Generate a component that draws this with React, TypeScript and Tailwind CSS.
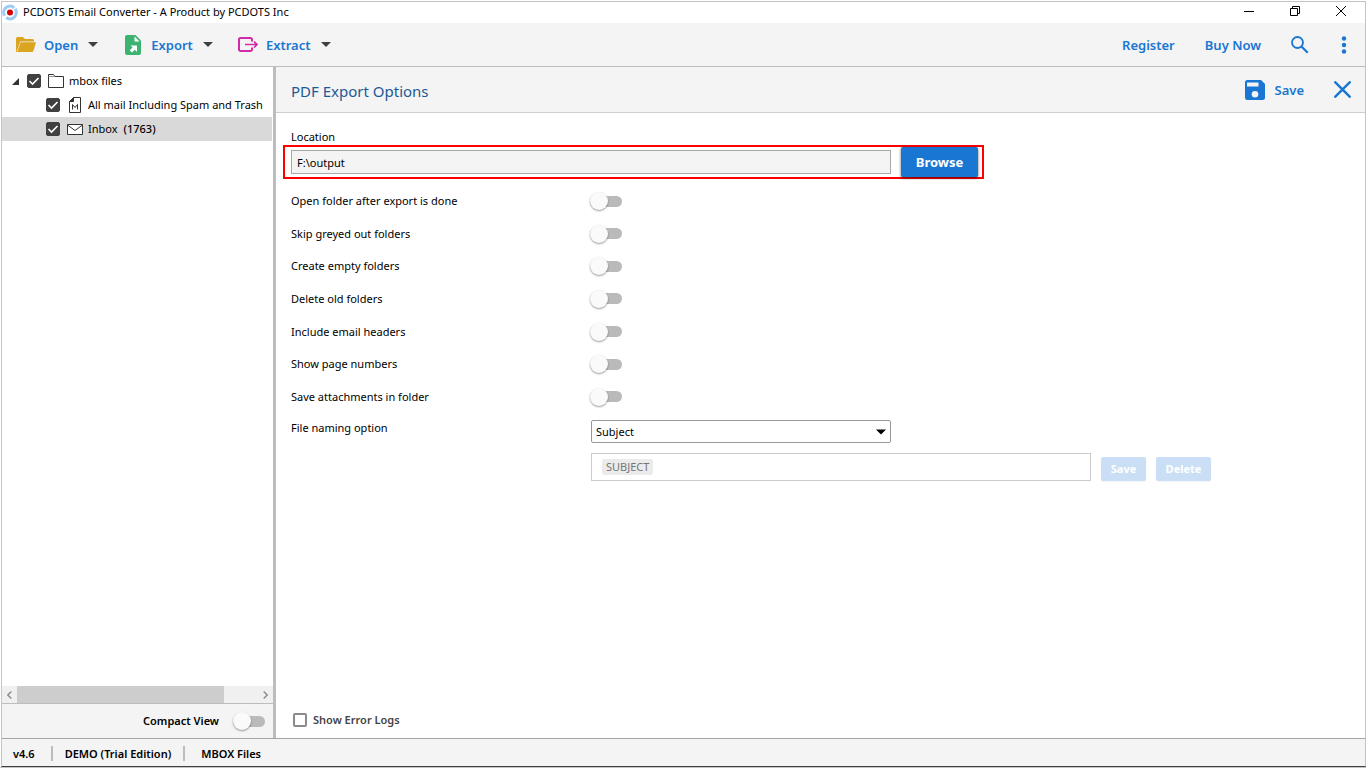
import React, { useState } from 'react';

interface SwitchProps {
  id: string;
  checked: boolean;
  onChange: (value: boolean) => void;
}

interface TreeItem {
  id: string;
  label: string;
  count?: number;
  level: number;
  icon: React.ReactNode;
}

const OPTIONS = [
  { id: 'openFolder', label: 'Open folder after export is done' },
  { id: 'skipGreyed', label: 'Skip greyed out folders' },
  { id: 'createEmpty', label: 'Create empty folders' },
  { id: 'deleteOld', label: 'Delete old folders' },
  { id: 'includeHeaders', label: 'Include email headers' },
  { id: 'pageNumbers', label: 'Show page numbers' },
  { id: 'saveAttachments', label: 'Save attachments in folder' },
];

const LogoIcon = () => (
  <svg width="18" height="18" viewBox="0 0 18 18" fill="none">
    <circle cx="8" cy="8.500" r="6.300" stroke="#9ccbf5" strokeWidth="3" strokeDasharray="17.300 2.500" transform="rotate(-35 8 8.500)" />
    <circle cx="8" cy="8.500" r="3" fill="#d40000" />
  </svg>
);

const OpenIcon = () => (
  <svg width="20" height="16" viewBox="0 0 20 16">
    <path d="M1.5 0H7l2 2h7.5A1.5 1.5 0 0 1 18 3.500V4.500H4.200L1.500 12.500 0 14V1.500A1.500 1.500 0 0 1 1.500 0Z" fill="#daa520" />
    <path d="M4.500 5.300H20L17.400 14a1.500 1.500 0 0 1-1.400 1H1.200Z" fill="#daa520" />
    <path d="M0 12L1.500 15H0Z" fill="#daa520" />
  </svg>
);

const ExportIcon = () => (
  <svg width="16" height="20" viewBox="0 0 16 20">
    <path d="M2 0H10.500L16 5.500V18a2 2 0 0 1-2 2H2a2 2 0 0 1-2-2V2A2 2 0 0 1 2 0Z" fill="#3cb371" />
    <path d="M9.500 1.500V6.500H14.500Z" fill="#fff" />
    <path d="M5.500 10.500H12V17L9.800 14.800 7 17.600 4.700 15.300 7.600 12.600Z" fill="#fff" />
  </svg>
);

const ExtractIcon = () => (
  <svg width="20" height="16" viewBox="0 0 20 16" fill="none" stroke="#d12ba8" strokeWidth="2">
    <path d="M14 4.500V2.500A1.500 1.500 0 0 0 12.500 1H2.500A1.500 1.500 0 0 0 1 2.500V12.500A1.500 1.500 0 0 0 2.500 14H12.500A1.500 1.500 0 0 0 14 12.500V10.500" />
    <path d="M7 7.500H18.500M16 4.500L19 7.500 16 10.500" strokeWidth="1.700" />
  </svg>
);

const Caret = () => (
  <svg width="10" height="5" viewBox="0 0 10 5">
    <path d="M0 0H10L5 5Z" fill="#404040" />
  </svg>
);

const FolderIcon = () => (
  <svg width="16" height="14" viewBox="0 0 16 14" fill="#fff" stroke="#333" strokeWidth="1">
    <path d="M.5 13.500V.5H5.500L7 2.500H15.500V13.500Z" />
    <path d="M.5 2.500H7" stroke="#999" />
  </svg>
);

const MboxIcon = () => (
  <svg width="12" height="16" viewBox="0 0 12 16" fill="#fff" stroke="#333" strokeWidth="1">
    <path d="M4.500 .5H11.500V15.500H.5V4.500Z" />
    <path d="M4.500 .5V4.500H.5Z" fill="#333" />
    <path d="M3.500 12.500V7.500L6 10.500 8.500 7.500V12.500" fill="none" />
  </svg>
);

const MailIcon = () => (
  <svg width="16" height="11" viewBox="0 0 16 11" fill="#fff" stroke="#333" strokeWidth="1">
    <path d="M.5 .5H15.500V10.500H.5Z" />
    <path d="M.5 1L8 6.500 15.500 1" fill="none" />
  </svg>
);

const SaveIcon = () => (
  <svg width="20" height="20" viewBox="0 0 20 20">
    <path d="M2.500 0H16L20 4V17.500A2.500 2.500 0 0 1 17.500 20H2.500A2.500 2.500 0 0 1 0 17.500V2.500A2.500 2.500 0 0 1 2.500 0Z" fill="#1976d2" />
    <path d="M2 2.500H13.500V6.500H2Z" fill="#f4f4f4" />
    <circle cx="10" cy="14.200" r="3.300" fill="#f4f4f4" />
  </svg>
);

const TREE: TreeItem[] = [
  { id: 'root', label: 'mbox files', level: 0, icon: <FolderIcon /> },
  { id: 'all', label: 'All mail Including Spam and Trash', level: 1, icon: <MboxIcon /> },
  { id: 'inbox', label: 'Inbox', count: 1763, level: 1, icon: <MailIcon /> },
];

const Switch: React.FC<SwitchProps> = ({ id, checked, onChange }) => (
  <input
    id={id}
    type="checkbox"
    role="switch"
    checked={checked}
    onChange={e => onChange(e.target.checked)}
    className="flex h-[11px] w-8 shrink-0 appearance-none items-center rounded-full bg-[#bababa] before:size-[18px] before:rounded-full before:bg-[#fafafa] before:shadow-[0_1px_2px_rgba(0,0,0,0.4)] checked:justify-end checked:bg-[#90c0ee]"
  />
);

const TreeCheckbox: React.FC<{ label: string }> = ({ label }) => {
  const [checked, setChecked] = useState(true);
  return (
    <span className="grid size-[14px] shrink-0">
      <input
        type="checkbox"
        aria-label={label}
        checked={checked}
        onChange={e => setChecked(e.target.checked)}
        className="col-start-1 row-start-1 size-[14px] appearance-none rounded-xs border border-[#404040] bg-white checked:bg-[#404040]"
      />
      {checked && (
        <svg className="pointer-events-none col-start-1 row-start-1" width="14" height="14" viewBox="0 0 14 14" fill="none" stroke="#fff" strokeWidth="1.600">
          <path d="M2.500 7L5.500 10 11.500 4" />
        </svg>
      )}
    </span>
  );
};

export default function App() {
  const [options, setOptions] = useState<Record<string, boolean>>({});
  const [compact, setCompact] = useState(false);
  const [errorLogs, setErrorLogs] = useState(false);
  const [naming, setNaming] = useState('Subject');
  const [selected, setSelected] = useState('inbox');

  return (
    <div className="flex h-screen flex-col border-b border-[#c4c4c4] bg-white pl-px pt-px font-['Noto_Sans','Open_Sans',sans-serif] text-[11px] leading-4 text-black">
      <div className="flex min-h-0 flex-1 flex-col border-x border-t border-x-[#c4c4c4] border-t-[#c4c4c4] border-b border-b-[#404040] bg-white">
        {/* Title bar */}
        <header className="flex h-[21px] shrink-0 items-center pr-[19px]">
          <LogoIcon />
          <h1 className="ml-[3px] flex-1 pb-0.5">PCDOTS Email Converter - A Product by PCDOTS Inc</h1>
          <div className="flex items-center gap-[36px] pb-1">
            <button aria-label="Minimize">
              <svg width="10" height="10" viewBox="0 0 10 10"><path d="M0 5.500H10" stroke="#000" /></svg>
            </button>
            <button aria-label="Restore">
              <svg width="10" height="10" viewBox="0 0 10 10" fill="none" stroke="#000"><path d="M.5 2.500H7.500V9.500H.5ZM2.500 2.500V.5H9.500V7.500H7.500" /></svg>
            </button>
            <button aria-label="Close">
              <svg width="10" height="10" viewBox="0 0 10 10" stroke="#000"><path d="M0 0L10 10M10 0L0 10" /></svg>
            </button>
          </div>
        </header>

        {/* Toolbar */}
        <nav className="flex h-11 shrink-0 items-center justify-between border-b border-[#bdbdbd] bg-[#f4f4f4] pl-[14px] pr-[18px] text-[13px] leading-5 font-semibold text-[#1976d2]">
          <div className="flex items-center gap-[25px]">
            <button className="flex items-center gap-2"><OpenIcon /> Open <span className="pl-0.5"><Caret /></span></button>
            <button className="flex items-center gap-2">
              <span className="flex w-5 justify-center"><ExportIcon /></span> Export <span className="pl-0.5"><Caret /></span>
            </button>
            <button className="flex items-center gap-2"><ExtractIcon /> Extract <span className="pl-0.5"><Caret /></span></button>
          </div>
          <div className="flex items-center gap-[30px]">
            <a href="#register">Register</a>
            <a href="#buy">Buy Now</a>
            <button aria-label="Search" className="pr-0.5">
              <svg width="18" height="18" viewBox="0 0 18 18" fill="none" stroke="#1976d2">
                <circle cx="6.500" cy="6.500" r="5.500" strokeWidth="1.800" />
                <path d="M10.500 10.500L16.700 16.700" strokeWidth="2.200" />
              </svg>
            </button>
            <button aria-label="More">
              <svg width="6" height="18" viewBox="0 0 6 18" fill="#1976d2">
                <circle cx="3" cy="2.500" r="2.200" /><circle cx="3" cy="9" r="2.200" /><circle cx="3" cy="15.500" r="2.200" />
              </svg>
            </button>
          </div>
        </nav>

        <div className="flex min-h-0 flex-1 border-b border-[#a6a6a6]">
          {/* Folder tree */}
          <aside className="flex w-[274px] shrink-0 flex-col border-r-3 border-[#bdbdbd]">
            <ul className="flex-1 overflow-hidden pt-0.5 pr-px">
              {TREE.map(item => (
                <li
                  key={item.id}
                  onClick={() => setSelected(item.id)}
                  className={`flex h-6 items-center whitespace-nowrap ${item.level === 0 ? 'pl-[10px]' : 'pl-11'} ${selected === item.id ? 'bg-[#d9d9d9]' : ''}`}
                >
                  {item.level === 0 && (
                    <svg className="mr-2 shrink-0" width="7" height="7" viewBox="0 0 7 7"><path d="M7 0V7H0Z" fill="#333" /></svg>
                  )}
                  <TreeCheckbox label={item.label} />
                  <span className="ml-[7px] mr-[5px] flex w-4 shrink-0 justify-center">{item.icon}</span>
                  <span>{item.label}</span>
                  {item.count && <span className="ml-[6px] font-medium">({item.count})</span>}
                </li>
              ))}
            </ul>
            <div className="flex h-[17px] shrink-0 items-stretch bg-[#f0f0f0]">
              <button aria-label="Scroll left" className="flex w-[15px] items-center justify-center">
                <svg width="5" height="8" viewBox="0 0 5 8" fill="none" stroke="#8a8a8a" strokeWidth="1.400"><path d="M4.300 .5L.8 4 4.300 7.500" /></svg>
              </button>
              <div className="flex-1"><div className="h-full w-[86%] bg-[#cdcdcd]" /></div>
              <button aria-label="Scroll right" className="flex w-[15px] items-center justify-center">
                <svg width="5" height="8" viewBox="0 0 5 8" fill="none" stroke="#8a8a8a" strokeWidth="1.400"><path d="M.7 .5L4.200 4 .7 7.500" /></svg>
              </button>
            </div>
            <div className="flex h-[35px] shrink-0 items-center justify-end gap-[14px] border-t border-[#bdbdbd] bg-[#f4f4f4] pr-2">
              <label htmlFor="compact" className="font-semibold">Compact View</label>
              <Switch id="compact" checked={compact} onChange={setCompact} />
            </div>
          </aside>

          {/* Export options */}
          <main className="flex min-w-0 flex-1 flex-col">
            <div className="flex h-[46px] shrink-0 items-center border-b border-[#cfcfcf] bg-[#f4f4f4] pl-[15px] pr-[14px]">
              <h2 className="flex-1 pt-0.5 text-[15px] leading-5 text-[#1d5a94]">PDF Export Options</h2>
              <button className="flex items-center gap-[10px] text-[13px] leading-5 font-semibold text-[#1976d2]"><SaveIcon /> Save</button>
              <button aria-label="Close options" className="ml-[30px]">
                <svg width="17" height="17" viewBox="0 0 17 17" stroke="#1976d2" strokeWidth="2.400"><path d="M.5 .5L16.500 16.500M16.500 .5L.5 16.500" /></svg>
              </button>
            </div>

            <div className="flex-1 pl-[15px] pt-4">
              <label htmlFor="location" className="block">Location</label>
              <div className="-ml-2 flex h-[34px] w-[701px] items-center gap-[10px] border-2 border-[#ff0000] pl-[6px]">
                <input id="location" readOnly value="F:\output" className="h-6 w-[600px] border border-[#a8a8a8] bg-[#f4f4f4] px-[5px]" />
                <button className="h-[30px] w-[77px] rounded-xs bg-[#1976d2] text-[13px] font-bold text-white shadow-[0_1px_3px_rgba(0,0,0,0.6)]">Browse</button>
              </div>

              <div className="mt-[6px] grid h-[228px] auto-rows-fr">
                {OPTIONS.map(opt => (
                  <div key={opt.id} className="flex items-center">
                    <label htmlFor={opt.id} className="w-[299px]">{opt.label}</label>
                    <Switch
                      id={opt.id}
                      checked={!!options[opt.id]}
                      onChange={v => setOptions(prev => ({ ...prev, [opt.id]: v }))}
                    />
                  </div>
                ))}
              </div>

              <div className="mt-[7px] flex">
                <label htmlFor="naming" className="w-[300px]">File naming option</label>
                <div className="grid w-[300px]">
                  <select
                    id="naming"
                    value={naming}
                    onChange={e => setNaming(e.target.value)}
                    className="col-start-1 row-start-1 h-[23px] w-full appearance-none rounded-xs border border-[#999] bg-white px-1"
                  >
                    <option>Subject</option>
                    <option>From</option>
                    <option>Date</option>
                  </select>
                  <svg className="pointer-events-none col-start-1 row-start-1 mr-[5px] self-center justify-self-end" width="10" height="6" viewBox="0 0 10 6"><path d="M0 .5H10L5 5.500Z" fill="#000" /></svg>
                </div>
              </div>

              <div className="mt-[10px] flex items-end gap-[10px] pl-[300px]">
                <div className="flex h-7 w-[500px] items-center border border-[#cccccc] pl-[10px]">
                  <span className="rounded-xs bg-[#ebebeb] px-1 text-[#757575]">{naming.toUpperCase()}</span>
                  <input aria-label="Custom name pattern" className="min-w-0 flex-1 outline-none" />
                </div>
                <button disabled className="h-6 w-[45px] rounded-xs bg-[#cadff5] font-bold text-white shadow-xs">Save</button>
                <button disabled className="h-6 w-[55px] rounded-xs bg-[#cadff5] font-bold text-white shadow-xs">Delete</button>
              </div>
            </div>

            <label className="mb-[10px] ml-[17px] flex items-center gap-[6px] self-start font-semibold text-[#444]">
              <input
                type="checkbox"
                checked={errorLogs}
                onChange={e => setErrorLogs(e.target.checked)}
                className="size-[14px] appearance-none rounded-xs border-2 border-[#8c8c8c] bg-white checked:bg-[#1976d2]"
              />
              Show Error Logs
            </label>
          </main>
        </div>

        {/* Status bar */}
        <footer className="flex h-[27px] shrink-0 items-center gap-3 bg-[#f4f4f4] pl-[11px] pt-0.5 font-semibold">
          <span className="mr-1">v4.6</span>
          <span className="h-[15px] w-0.5 bg-[#bdbdbd]" />
          <span>DEMO (Trial Edition)</span>
          <span className="h-[15px] w-0.5 bg-[#bdbdbd]" />
          <span className="ml-1">MBOX Files</span>
        </footer>
      </div>
    </div>
  );
}
